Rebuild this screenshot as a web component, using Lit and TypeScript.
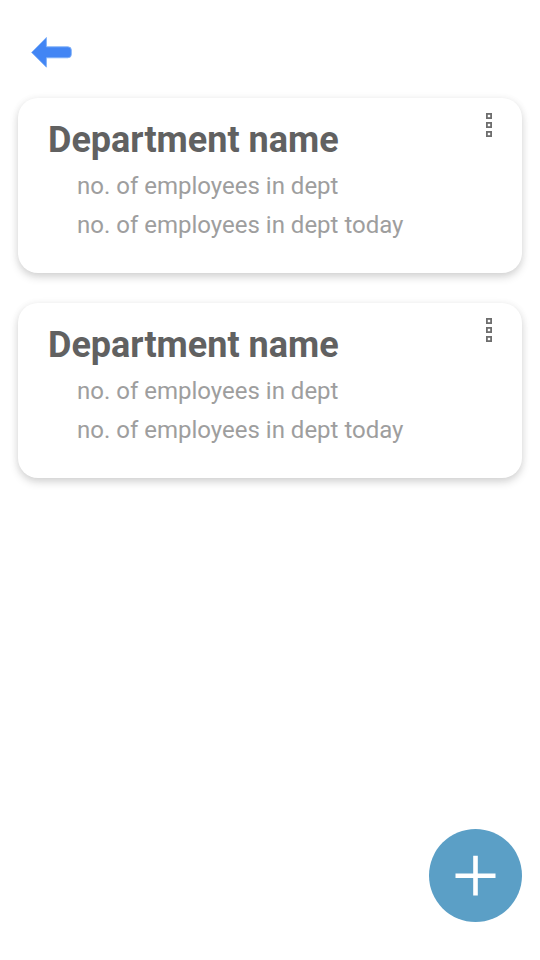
import { LitElement, html, css } from "lit";
import { customElement, property, state } from "lit/decorators.js";

@customElement("department-card")
class DepartmentCard extends LitElement {
  @property() name = "";
  @property() total = "";
  @property() today = "";

  static styles = css`
    :host {
      display: block;
    }
    .card {
      display: flex;
      align-items: flex-start;
      justify-content: space-between;
      padding: 21px 18px 28px 30px;
      border-radius: 20px;
      background: #fff;
      box-shadow: 0 4px 8px rgba(0, 0, 0, 0.17), 0 0 8px rgba(0, 0, 0, 0.04);
    }
    .name {
      margin: 0 0 5px;
      font-size: 36px;
      line-height: 43px;
      font-weight: 700;
      color: #616161;
    }
    .line {
      margin: 0;
      padding-left: 29px;
      font-size: 24px;
      line-height: 39px;
      color: #9e9e9e;
    }
    .menu {
      flex: none;
      display: flex;
      justify-content: center;
      width: 30px;
      margin: -6px 0 0;
      padding: 0;
      border: 0;
      background: none;
      cursor: pointer;
    }
    .dots {
      display: block;
    }
  `;

  render() {
    return html`
      <article class="card">
        <div>
          <h2 class="name">${this.name}</h2>
          <p class="line">${this.total}</p>
          <p class="line">${this.today}</p>
        </div>
        <button class="menu" aria-label="Department options">
          <svg class="dots" width="6" height="24" viewBox="0 0 6 24" fill="none" stroke="#6e6e6e" stroke-width="1.8">
            <rect x="0.9" y="0.9" width="4.2" height="4.2" />
            <rect x="0.9" y="9.9" width="4.2" height="4.2" />
            <rect x="0.9" y="18.9" width="4.2" height="4.2" />
          </svg>
        </button>
      </article>
    `;
  }
}

@customElement("app-root")
class AppRoot extends LitElement {
  @state() departments = [
    { name: "Department name", total: "no. of employees in dept", today: "no. of employees in dept today" },
    { name: "Department name", total: "no. of employees in dept", today: "no. of employees in dept today" },
  ];

  static styles = css`
    :host {
      display: block;
      min-height: 100vh;
      background: #fff;
      font-family: Roboto, "Liberation Sans", sans-serif;
    }
    .bar {
      display: flex;
      padding: 36px 30px 30px;
    }
    .back {
      display: block;
      padding: 0;
      border: 0;
      background: none;
      cursor: pointer;
    }
    .icon {
      display: block;
    }
    .list {
      display: grid;
      gap: 30px;
      padding: 0 18px 150px;
    }
    .add {
      position: fixed;
      right: 18px;
      bottom: 38px;
      display: flex;
      align-items: center;
      justify-content: center;
      width: 93px;
      height: 93px;
      padding: 0;
      border: 0;
      border-radius: 50%;
      background: #5b9fc6;
      cursor: pointer;
    }
  `;

  render() {
    return html`
      <header class="bar">
        <button class="back" aria-label="Back">
          <svg class="icon" width="42" height="32" viewBox="0 0 42 32">
            <path
              fill="#4285f4"
              stroke="#7fb0f8"
              stroke-width="0.9"
              stroke-linejoin="round"
              d="M1.6 16.4 16.4 1.5V10.8H37.8Q41.3 10.8 41.3 14V18.6Q41.3 21.8 37.8 21.8H16.4V31.2Z"
            />
          </svg>
        </button>
      </header>
      <main class="list">
        ${this.departments.map(
          (d) => html`<department-card .name=${d.name} .total=${d.total} .today=${d.today}></department-card>`
        )}
      </main>
      <button class="add" aria-label="Add department">
        <svg class="icon" width="41" height="41" viewBox="0 0 41 41">
          <path d="M20.5 0.8V40.5M0.5 20.8H40.5" stroke="#fff" stroke-width="4.6" />
        </svg>
      </button>
    `;
  }
}
